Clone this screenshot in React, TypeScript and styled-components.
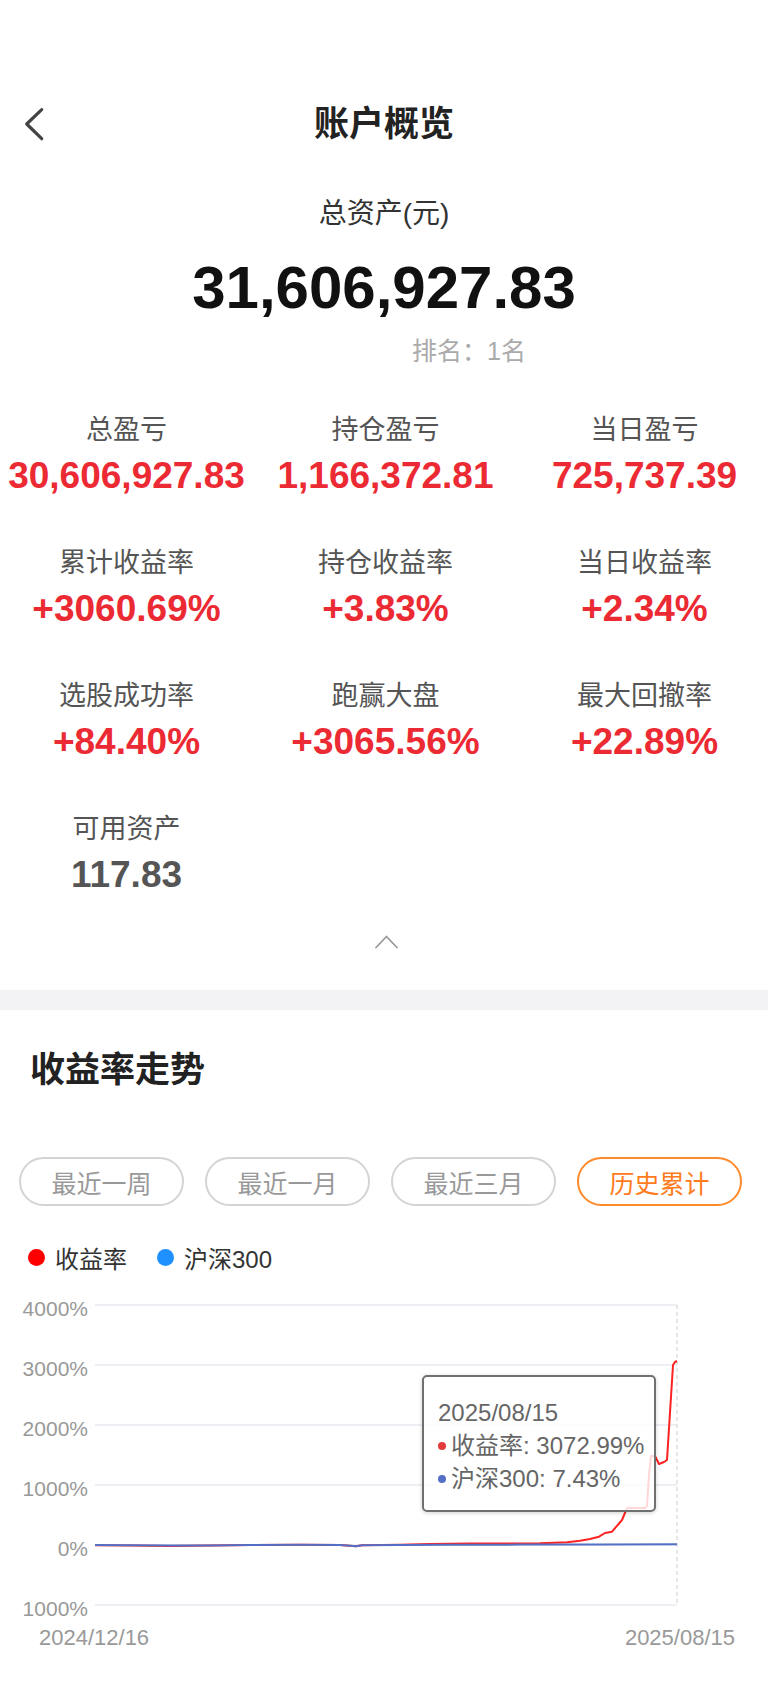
import React from 'react';
import styled, { createGlobalStyle } from 'styled-components';

const GlobalStyle = createGlobalStyle`
  html, body {
    margin: 0;
    background: #fff;
  }
  body {
    font-family: "Liberation Sans", "Noto Sans CJK SC", sans-serif;
  }
`;

const Page = styled.div`
  width: 768px;
  min-height: 1686px;
  padding-top: 80px;
  box-sizing: border-box;
  background: #fff;
  overflow: hidden;
`;

const Header = styled.header`
  display: grid;
  grid-template-columns: 1fr auto 1fr;
  align-items: center;
  height: 88px;
`;

const BackButton = styled.button`
  justify-self: start;
  display: flex;
  margin-left: 24px;
  padding: 0;
  border: 0;
  background: none;
  cursor: pointer;
`;

const Title = styled.h1`
  margin: 0;
  font-size: 35px;
  font-weight: 700;
  line-height: 88px;
  color: #222;
`;

const Summary = styled.section`
  display: flex;
  flex-direction: column;
  align-items: center;
`;

const SummaryLabel = styled.div`
  margin-top: 26px;
  font-size: 28px;
  line-height: 40px;
  color: #333;
`;

const TotalValue = styled.div`
  margin-top: 19px;
  font-size: 60px;
  font-weight: 700;
  line-height: 70px;
  color: #111;
`;

const Rank = styled.div`
  margin-top: 10px;
  margin-left: 170px;
  font-size: 25px;
  line-height: 36px;
  color: #aaa;
`;

const StatsGrid = styled.section`
  display: grid;
  grid-template-columns: repeat(3, 259px);
  row-gap: 41px;
  margin: 41px 0 0 -3px;
`;

const Stat = styled.div`
  display: flex;
  flex-direction: column;
  align-items: center;
`;

const StatLabel = styled.div`
  font-size: 27px;
  line-height: 40px;
  color: #555;
  white-space: nowrap;
`;

const StatValue = styled.div<{ $color: string }>`
  font-size: 37px;
  font-weight: 700;
  line-height: 52px;
  color: ${p => p.$color};
  white-space: nowrap;
`;

const ExpandRow = styled.div`
  display: flex;
  align-items: center;
  justify-content: center;
  height: 50px;
  margin-top: 16px;
  padding-left: 4px;
`;

const Divider = styled.div`
  height: 20px;
  margin-top: 23px;
  background: #f3f3f5;
`;

const SectionTitle = styled.h2`
  margin: 35px 0 0 30px;
  font-size: 35px;
  font-weight: 700;
  line-height: 50px;
  color: #222;
`;

const RangeTabs = styled.div`
  display: flex;
  gap: 21px;
  margin-top: 62px;
  padding-left: 19px;
`;

const RangeTab = styled.button<{ $active?: boolean }>`
  display: flex;
  align-items: center;
  justify-content: center;
  width: 165px;
  height: 49px;
  box-sizing: border-box;
  padding: 0;
  border-radius: 25px;
  border: 2px solid ${p => (p.$active ? '#ff8a2c' : '#d4d4d4')};
  background: #fff;
  color: ${p => (p.$active ? '#ff7b1c' : '#999')};
  font-family: inherit;
  font-size: 25px;
`;

const Legend = styled.div`
  display: flex;
  align-items: center;
  height: 36px;
  margin-top: 33px;
  padding-left: 28px;
`;

const LegendItem = styled.div`
  display: flex;
  align-items: center;
  gap: 10px;
  font-size: 24px;
  color: #333;
  & + & {
    margin-left: 30px;
  }
`;

const LegendDot = styled.span<{ $color: string }>`
  flex-shrink: 0;
  width: 17px;
  height: 17px;
  border-radius: 50%;
  background: ${p => p.$color};
`;

const ChartWrap = styled.div`
  position: relative;
  height: 380px;
  margin-top: 5px;
`;

const Tooltip = styled.div`
  position: absolute;
  left: 422px;
  top: 95px;
  width: 234px;
  box-sizing: border-box;
  padding: 19px 12px 15px 14px;
  border: 2px solid #707070;
  border-radius: 5px;
  background: rgba(255, 255, 255, 0.82);
  box-shadow: 0 1px 4px rgba(0, 0, 0, 0.18);
  font-size: 24px;
  line-height: 33px;
  color: #666;
`;

const TipRow = styled.div`
  display: flex;
  align-items: center;
  white-space: nowrap;
`;

const TipDot = styled.span<{ $color: string }>`
  flex-shrink: 0;
  width: 8px;
  height: 8px;
  margin-right: 5px;
  border-radius: 50%;
  background: ${p => p.$color};
`;

const RED = '#ec2a33';

const stats = [
  { label: '总盈亏', value: '30,606,927.83', color: RED },
  { label: '持仓盈亏', value: '1,166,372.81', color: RED },
  { label: '当日盈亏', value: '725,737.39', color: RED },
  { label: '累计收益率', value: '+3060.69%', color: RED },
  { label: '持仓收益率', value: '+3.83%', color: RED },
  { label: '当日收益率', value: '+2.34%', color: RED },
  { label: '选股成功率', value: '+84.40%', color: RED },
  { label: '跑赢大盘', value: '+3065.56%', color: RED },
  { label: '最大回撤率', value: '+22.89%', color: RED },
  { label: '可用资产', value: '117.83', color: '#555' },
];

const ranges = ['最近一周', '最近一月', '最近三月', '历史累计'];

// chart coords, relative to ChartWrap top
const gridYs = [25, 85, 145, 205, 265, 325];
const yLabels = ['4000%', '3000%', '2000%', '1000%', '0%', '1000%'];

const redPts: [number, number][] = [
  [95, 265.3], [130, 265.6], [170, 265.9], [210, 265.6], [250, 265.1], [300, 264.8],
  [340, 265], [350, 265.8], [356, 266.2], [362, 265.2], [400, 264.8], [430, 264],
  [470, 263.6], [510, 263.4], [540, 263.2], [567, 262.3], [580, 260.7], [590, 259],
  [599, 256.7], [605, 253], [612, 251.7], [622, 240], [627, 228], [645, 228],
  [647, 226], [649, 195], [651, 176], [655, 176], [657, 180], [659, 184],
  [664, 182], [667, 180], [673, 85], [675, 82], [677, 81],
];

const bluePts: [number, number][] = [
  [95, 265], [130, 265.2], [170, 265.6], [210, 265.4], [250, 265], [300, 264.8],
  [340, 265], [350, 265.8], [356, 266.3], [362, 265.2], [400, 265], [450, 264.8],
  [520, 264.6], [600, 264.4], [677, 264.3],
];

const toPath = (pts: [number, number][]) =>
  pts.map(([x, y], i) => `${i ? 'L' : 'M'}${x},${y}`).join(' ');

function BackIcon() {
  return (
    <svg width="24" height="36" viewBox="0 0 24 36">
      <polyline points="17.7,3.7 2.7,18 17.7,32.7" fill="none" stroke="#444"
        strokeWidth="3.2" strokeLinecap="round" strokeLinejoin="round" />
    </svg>
  );
}

function UpIcon() {
  return (
    <svg width="25" height="16" viewBox="0 0 25 16">
      <polyline points="2,13.5 12.5,2.5 23,13.5" fill="none" stroke="#999"
        strokeWidth="1.8" strokeLinecap="round" strokeLinejoin="round" />
    </svg>
  );
}

function TrendChart() {
  return (
    <ChartWrap>
      <svg width="768" height="380" viewBox="0 0 768 380">
        {gridYs.map(y => (
          <line key={y} x1="95" x2="677" y1={y} y2={y} stroke="#e7eaf1" strokeWidth="1.5" />
        ))}
        <line x1="677" x2="677" y1="25" y2="325" stroke="#cfcfcf" strokeWidth="1" strokeDasharray="4 3" />
        {gridYs.map((y, i) => (
          <text key={i} x="88" y={y + 11} textAnchor="end" fontSize="21"
            fill="#999" fontFamily="Liberation Sans, sans-serif">
            {yLabels[i]}
          </text>
        ))}
        <path d={toPath(redPts)} fill="none" stroke="#ff2222" strokeWidth="2" strokeLinejoin="round" />
        <path d={toPath(bluePts)} fill="none" stroke="#5470c6" strokeWidth="2" strokeLinejoin="round" />
        <text x="39" y="365" fontSize="22" fill="#999" fontFamily="Liberation Sans, sans-serif">2024/12/16</text>
        <text x="735" y="365" textAnchor="end" fontSize="22" fill="#999" fontFamily="Liberation Sans, sans-serif">2025/08/15</text>
      </svg>

      <Tooltip>
        <div>2025/08/15</div>
        <TipRow><TipDot $color="#e33b3b" />收益率: 3072.99%</TipRow>
        <TipRow><TipDot $color="#5470c6" />沪深300: 7.43%</TipRow>
      </Tooltip>
    </ChartWrap>
  );
}

export default function App() {
  return (
    <>
      <GlobalStyle />
      <Page>
        <Header>
          <BackButton aria-label="back"><BackIcon /></BackButton>
          <Title>账户概览</Title>
          <span />
        </Header>

        <Summary>
          <SummaryLabel>总资产(元)</SummaryLabel>
          <TotalValue>31,606,927.83</TotalValue>
          <Rank>排名：1名</Rank>
        </Summary>

        <StatsGrid>
          {stats.map(s => (
            <Stat key={s.label}>
              <StatLabel>{s.label}</StatLabel>
              <StatValue $color={s.color}>{s.value}</StatValue>
            </Stat>
          ))}
        </StatsGrid>

        <ExpandRow><UpIcon /></ExpandRow>
        <Divider />

        <SectionTitle>收益率走势</SectionTitle>

        <RangeTabs>
          {ranges.map((r, i) => (
            <RangeTab key={r} $active={i === ranges.length - 1}>{r}</RangeTab>
          ))}
        </RangeTabs>

        <Legend>
          <LegendItem><LegendDot $color="#ff0000" />收益率</LegendItem>
          <LegendItem><LegendDot $color="#1e90ff" />沪深300</LegendItem>
        </Legend>

        <TrendChart />
      </Page>
    </>
  );
}
